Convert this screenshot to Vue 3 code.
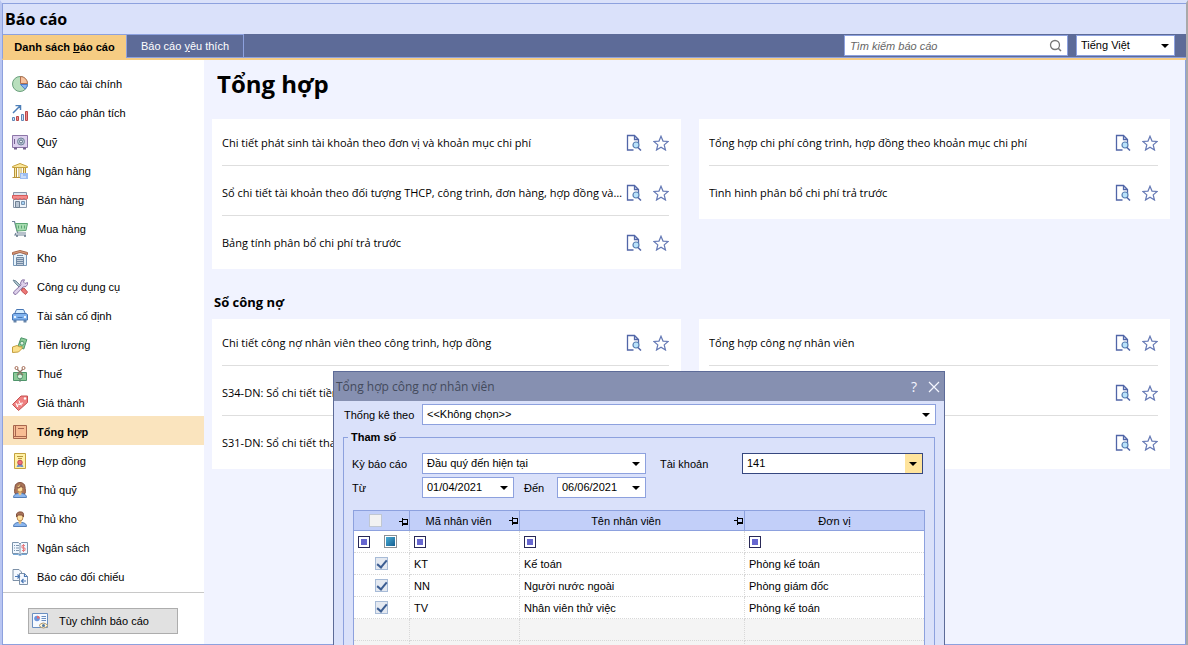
<script setup>
import { ref } from 'vue'

const menu = [
  { label: 'Báo cáo tài chính', icon: '<circle cx="8" cy="8" r="7.5" fill="#b9dfbd" stroke="#6a9f7c"/><path d="M8.500 .5A7 7 0 0 1 15.500 7.500H8.500Z" fill="#f8c4a0" stroke="#b06f50"/><path d="M8.500 8.500H15.500A7 7 0 0 1 13 13.200Z" fill="#8ab4f0" stroke="#4d7ec8"/>' },
  { label: 'Báo cáo phân tích', icon: '<path d="M1 8 5.500 3.500M3.500 .5H8.500V5M5 4 8 1" fill="none" stroke="#4d7fb8" stroke-width="1.500"/><path d="M.5 12.500h2v3h-2z" fill="#cfe0f4" stroke="#5d86b5"/><path d="M4.500 11.500h2v4h-2z" fill="#ee8a8a" stroke="#b94848"/><path d="M9.500 9.500h2v6h-2z" fill="#cfe0f4" stroke="#5d86b5"/><path d="M13.500 6.500h2v9h-2z" fill="#ee8a8a" stroke="#b94848"/>' },
  { label: 'Quỹ', icon: '<path d="M.5 1.500h15v12H.5z" fill="#ddd0ee" stroke="#8d76a8"/><path d="M2 14.500h3M11 14.500h3" stroke="#75608f" stroke-width="2"/><path d="M2.500 5v5" stroke="#75608f"/><circle cx="9" cy="7.500" r="3.500" fill="#b9c6d6" stroke="#73859b"/><circle cx="9" cy="7.500" r="1.500" fill="#e9eff5" stroke="#596b80"/>' },
  { label: 'Ngân hàng', icon: '<path d="M.5 4.500v-1L8 .5l7.500 3v1z" fill="#fbe79b" stroke="#c5a13d"/><path d="M2.500 5v9M4.500 5v9M7 5v9M9 5v9M11.500 5v9M13.500 5v9M.5 14.500h14" stroke="#b7943c"/><path d="M3.500 5v9M8 5v9M12.500 5v9" stroke="#fbe9a4"/><path d="M8 10h8v6H8z" fill="#9bbcf2"/><path d="M9 12h2M9 14h5" stroke="#f7fbff"/>' },
  { label: 'Bán hàng', icon: '<path d="M1.500 7.500h13v8h-13z" fill="#eef4fa" stroke="#8795a8"/><path d="M3.500 9.500h4v6h-4z" fill="#b9c6d5" stroke="#718294"/><path d="M9.500 9.500h3v3h-3z" fill="#a8d2f4" stroke="#7895b2"/><path d="M1.500 .5h13v3h-13z" fill="#dce4ee" stroke="#8795a8"/><path d="M.5 3.500h15v3l-1.500 1-2-1-2 1-2-1-2 1-2-1-2 1L.5 6z" fill="#f48b8b" stroke="#d45b5b"/>' },
  { label: 'Mua hàng', icon: '<path d="M0 .5h2.500l3 11.500h8.500M4 12l-1 2h11" fill="none" stroke="#72859a" stroke-width="1.200"/><path d="M3.500 2.500h12l-1.500 7-9 .5z" fill="#a8dcb1" stroke="#5da774"/><path d="M6.500 4.500v3M9.500 4.500v3M12.500 4.500v3" stroke="#5da774"/><circle cx="5" cy="15" r="1" fill="#607386"/><circle cx="13" cy="15" r="1" fill="#607386"/>' },
  { label: 'Kho', icon: '<path d="M1.500 5 8 1.500 14.500 5v10.500h-13z" fill="#e5f2fc" stroke="#7798b9"/><path d="M.5 4.500v-2L8 .5l7.500 2v2L8 2.500z" fill="#dda080" stroke="#a9694d"/><path d="M4.500 7.500h7v8h-7z" fill="#c4cfdb" stroke="#718aa5"/><path d="M5 9.500h6M5 11.500h6M5 13.500h6M5 5.500h6" stroke="#718aa5"/>' },
  { label: 'Công cụ dụng cụ', icon: '<path d="m1 1 3 1 7 7-1.500 1.500L3 4z" fill="#acc1cb" stroke="#728b99"/><path d="m10 10 2-1 3.500 4-2 2.500L9.500 12z" fill="#ed7777" stroke="#c24f4f"/><path d="M12.500 .8 10 1 8.500 4l.5 2-7.500 7 .5 2 2 .5L11 8l3-.5 1.500-2V3.500l-2.500 1-1.500-1.500z" fill="#ddd0ea" stroke="#8c77a8"/>' },
  { label: 'Tài sản cố định', icon: '<path d="m2.500 6 2-4.500h7l2 4.500z" fill="#d5edff" stroke="#4776b4"/><path d="M1.500 12h3v2.500h-3zM11.500 12h3v2.500h-3z" fill="#6885a8"/><path d="M.5 6.500 2 5.500h12l1.500 1v5.500H.5z" fill="#80b3ef" stroke="#4776b4"/><path d="M2 8h2v2H2zM12 8h2v2h-2z" fill="#e9f5ff"/><path d="M5.500 9.500h5" stroke="#4776b4"/>' },
  { label: 'Tiền lương', icon: '<path d="m9 .8 5.800 1.700-3 9.500-6-2z" fill="#8ccc99" stroke="#4e956a"/><circle cx="10" cy="6.200" r="2" fill="#dff1df" stroke="#4e956a"/><path d="M.5 10 5 8.500 8 10l2-.5v2L6.500 15l-6 .5z" fill="#fbe08b" stroke="#c49e3e"/>' },
  { label: 'Thuế', icon: '<path d="M1.500 6.500h13v8h-13z" fill="#8cca98" stroke="#4e956a"/><circle cx="8" cy="10.500" r="2.500" fill="#dff1df" stroke="#4e956a"/><path d="m5 3 6 6M11 3 5 9" stroke="#8f7467" stroke-width="1.300"/><circle cx="4.500" cy="2" r="1.500" fill="#fff" stroke="#a66d56"/><circle cx="11.500" cy="2" r="1.500" fill="#fff" stroke="#a66d56"/><path d="M8 12v4" stroke="#70817a"/>' },
  { label: 'Giá thành', icon: '<path d="M.5 9.500 9 1h6.500v6.500l-9 8z" fill="#ef8181" stroke="#c65151"/><circle cx="13" cy="3.500" r="1.200" fill="#fff"/><path d="m4 8 1.500 4 .5-3 4 1M7 5.500l1 3 3-.5" fill="none" stroke="#fff"/>' },
  { label: 'Tổng hợp', icon: '<path d="M1.500 1.500h13v13h-13z" fill="#f8bd94" stroke="#a7664e"/><path d="M3.500 1.500v11M1.500 12.500h13M6 4.500h6" stroke="#a7664e"/>' },
  { label: 'Hợp đồng', icon: '<path d="M2.500 .5h11v15h-11z" fill="#fff1a5" stroke="#c5a33f"/><path d="M5 3.500h6M6 5.500h4" stroke="#b9973d"/><path d="m6 11-1.500 3h3l.5-1 .5 1h3L10 11z" fill="#6e91cb"/><circle cx="8" cy="9.500" r="2.300" fill="#ef6e78" stroke="#bf4b58"/>' },
  { label: 'Thủ quỹ', icon: '<path d="M3 11.500C2 9 3 7 3 5c0-6 10-6 10 0 0 2 1 4 0 6.500z" fill="#a9735b" stroke="#84543f"/><path d="M1.500 15.500q0-3.500 4.500-4h4q4.500.5 4.500 4z" fill="#8bb6ef" stroke="#547fb8"/><path d="M6.500 9h3v3L8 13.500 6.500 12z" fill="#eec482"/><ellipse cx="8" cy="6.500" rx="2.800" ry="3.700" fill="#ffe0a1" stroke="#ba8b50"/><path d="M5 6q3 0 4-2.500L11 6" fill="none" stroke="#94614a" stroke-width="1.500"/>' },
  { label: 'Thủ kho', icon: '<path d="M1.500 15.500q0-3.500 4.500-4h4q4.500.5 4.500 4z" fill="#8bb6ef" stroke="#547fb8"/><path d="M6.500 9h3v3L8 13.500 6.500 12z" fill="#eec482"/><ellipse cx="8" cy="6" rx="3" ry="4" fill="#ffe0a1" stroke="#ba8b50"/><path d="M4.500 6V3q1.500-3 5-2 2.500 0 2 5l-1.500-2H6z" fill="#a9735b" stroke="#84543f"/>' },
  { label: 'Ngân sách', icon: '<path d="M.5 2.500h6L8 4l1.500-1.500h6v11h-6L8 15l-1.500-1.500h-6z" fill="#f0f7ff" stroke="#7d95ad"/><path d="M8 4v10M2 5.500h1M4 5.500h3M2 8h1M4 8h3M2 10.500h1M4 10.500h3" stroke="#7d95ad"/><path d="M13 5.500h-3v2.500h3v2.500h-3M11.500 4v8" fill="none" stroke="#e77e81"/><path d="M1 14.500h5l2 1 2-1h5" fill="none" stroke="#73a7d7"/>' },
  { label: 'Báo cáo đối chiếu', icon: '<path d="M1 .5h6l2.500 2.500v8.500H1z" fill="#f5f9ff" stroke="#7d91a8"/><path d="M7.500 4.500h5l3 3v8h-8z" fill="#f5f9ff" stroke="#7d91a8"/><path d="M12.500 4.500v3h3M3 7.500h4M5.500 5.500l2 2-2 2M14 12H9.500M11.500 10l-2 2 2 2" fill="none" stroke="#4d7ab6" stroke-width="1.200"/>' },
]
const active = ref(12)

const general = [
  ['Chi tiết phát sinh tài khoản theo đơn vị và khoản mục chi phí', 'Sổ chi tiết tài khoản theo đối tượng THCP, công trình, đơn hàng, hợp đồng và...', 'Bảng tính phân bổ chi phí trả trước'],
  ['Tổng hợp chi phí công trình, hợp đồng theo khoản mục chi phí', 'Tình hình phân bổ chi phí trả trước'],
]
const debts = [
  ['Chi tiết công nợ nhân viên theo công trình, hợp đồng', 'S34-DN: Sổ chi tiết tiền', 'S31-DN: Sổ chi tiết tha'],
  ['Tổng hợp công nợ nhân viên', '', ''],
]
const sections = [{ title: '', cards: general }, { title: 'Sổ công nợ', cards: debts }]

const people = ref([
  { on: true, code: 'KT', name: 'Kế toán', unit: 'Phòng kế toán' },
  { on: true, code: 'NN', name: 'Người nước ngoài', unit: 'Phòng giám đốc' },
  { on: true, code: 'TV', name: 'Nhân viên thử việc', unit: 'Phòng kế toán' },
])
</script>

<template>
  <div class="app">
    <header class="title"><h1>Báo cáo</h1></header>
    <nav class="tabs">
      <button class="tab on">Danh sách <u>b</u>áo cáo</button>
      <button class="tab">Báo cáo <u>y</u>êu thích</button>
      <div class="tools">
        <label class="search">
          <input type="text" placeholder="Tìm kiếm báo cáo" aria-label="Tìm kiếm báo cáo" />
          <svg width="14" height="14" viewBox="0 0 14 14"><circle cx="6" cy="6" r="4.500" fill="none" stroke="#777" stroke-width="1.300" /><path d="m9 9 3 3" stroke="#777" stroke-width="1.500" /></svg>
        </label>
        <div class="combo lang"><select aria-label="Ngôn ngữ"><option>Tiếng Việt</option></select></div>
      </div>
    </nav>

    <div class="body">
      <aside>
        <ul>
          <li v-for="(m, i) in menu" :key="m.label">
            <button class="item" :class="{ on: i === active }" @click="active = i">
              <svg width="16" height="16" viewBox="0 0 16 16" v-html="m.icon"></svg>{{ m.label }}
            </button>
          </li>
        </ul>
        <div class="foot">
          <button class="custom">
            <svg width="16" height="16" viewBox="0 0 16 16"><path d="M.5.5h15v14H.5z" fill="#f5f9ff" stroke="#6a8fc1" /><circle cx="5" cy="5.500" r="2.800" fill="#6b95dc" /><path d="M5 5.500V2.700a2.800 2.800 0 0 1 2.800 2.800z" fill="#e46c70" /><path d="M9.500 3.500H14M9.500 5.500H14M9.500 7.500H14" stroke="#6a8fc1" /><path d="M7 12.500q4-5 9 0-4.500 5-9 0z" fill="#fff5d5" stroke="#af9871" /><circle cx="11.500" cy="12.500" r="1.500" fill="#5078a6" /></svg>
            Tùy chỉnh báo cáo
          </button>
        </div>
      </aside>

      <main>
        <h2>Tổng hợp</h2>
        <section v-for="(s, k) in sections" :key="k">
          <h3 v-if="s.title">{{ s.title }}</h3>
          <div class="cards">
            <ul v-for="(card, c) in s.cards" :key="c" class="card">
              <li v-for="(r, i) in card" :key="i" class="report">
                <a href="#" class="name">{{ r }}</a>
                <button class="act" aria-label="Xem">
                  <svg width="16" height="17" viewBox="0 0 16 17"><path d="M7.500 16H1.500V1.500h7l4 4V9M8.500 1.500v4h4" fill="none" stroke="#5166a8" stroke-width="1.300" /><circle cx="10" cy="11" r="3" fill="#b9e2fb" stroke="#5a80b3" stroke-width="1.200" /><path d="m12 13.500 3 3" stroke="#5166a8" stroke-width="1.500" /></svg>
                </button>
                <button class="act" aria-label="Yêu thích">
                  <svg width="16" height="16" viewBox="0 0 16 16"><path d="m8 1.200 2 4.900 5.200.4-4 3.400 1.300 5.100L8 12.200 3.500 15l1.300-5.100-4-3.400L6 6.100z" fill="none" stroke="#6579b5" stroke-width="1.200" /></svg>
                </button>
              </li>
            </ul>
          </div>
        </section>
      </main>
    </div>

    <div class="dialog" role="dialog" aria-labelledby="dlg">
      <div class="bar">
        <span id="dlg">Tổng hợp công nợ nhân viên</span>
        <button aria-label="Trợ giúp">?</button>
        <button aria-label="Đóng"><svg width="12" height="12" viewBox="0 0 12 12"><path d="m1 1 10 10M11 1 1 11" stroke="#f4f6ff" stroke-width="1.200" /></svg></button>
      </div>
      <div class="stat">
        <label for="by">Thống kê theo</label>
        <div class="combo"><select id="by"><option>&lt;&lt;Không chọn&gt;&gt;</option></select></div>
      </div>
      <fieldset>
        <legend>Tham số</legend>
        <div class="form">
          <label for="period">Kỳ báo cáo</label>
          <div class="combo wide"><select id="period"><option>Đầu quý đến hiện tại</option></select></div>
          <label for="acc" class="acc">Tài khoản</label>
          <div class="combo hot"><select id="acc"><option>141</option></select></div>
          <label for="from">Từ</label>
          <div class="combo"><input id="from" type="text" value="01/04/2021" /></div>
          <label for="to" class="to">Đến</label>
          <div class="combo"><input id="to" type="text" value="06/06/2021" /></div>
        </div>
        <table>
          <colgroup><col class="c1" /><col class="c2" /><col class="c3" /><col /></colgroup>
          <thead>
            <tr>
              <th><div class="th"><input type="checkbox" class="all" aria-label="Chọn tất cả" /><i class="pin"></i></div></th>
              <th><div class="th">Mã nhân viên<i class="pin"></i></div></th>
              <th><div class="th">Tên nhân viên<i class="pin"></i></div></th>
              <th><div class="th">Đơn vị</div></th>
            </tr>
          </thead>
          <tbody>
            <tr>
              <td><div class="filter"><button class="op" aria-label="Lọc"></button><button class="tri" aria-label="Trạng thái"></button></div></td>
              <td v-for="n in 3" :key="n"><div class="filter"><button class="op" aria-label="Lọc"></button></div></td>
            </tr>
            <tr v-for="p in people" :key="p.code">
              <td class="mid"><input v-model="p.on" type="checkbox" :aria-label="p.name" /></td>
              <td>{{ p.code }}</td><td>{{ p.name }}</td><td>{{ p.unit }}</td>
            </tr>
            <tr v-for="n in 2" :key="'e' + n" class="empty"><td></td><td></td><td></td><td></td></tr>
          </tbody>
        </table>
      </fieldset>
    </div>
  </div>
</template>

<style>
html, body, #app { height: 100%; }
</style>

<style scoped>
* { box-sizing: border-box; }
ul { list-style: none; margin: 0; padding: 0; }
button, input, select { font: inherit; color: inherit; border: 0; padding: 0; margin: 0; background: none; border-radius: 0; }
svg { display: block; flex: none; }
.app { position: relative; min-height: 100%; display: flex; flex-direction: column; overflow: hidden; background: #f1f3ff; border-top: 3px solid #dae1fa; border-right: 2px solid #a9a9a9; border-left: 2px solid #b9c6f2; font: 11px/16px "Liberation Sans", sans-serif; color: #000; }
.title { height: 31px; padding-left: 2px; display: flex; align-items: center; background: #dae1fa; border: 1px solid #8da1de; border-width: 1px 0 0 1px; }
.title h1 { margin: 0; font: bold 16px/24px "Open Sans", sans-serif; }
.tabs { height: 26px; display: flex; background: #5d6b98; border-bottom: 2px solid #f6cc83; border-left: 1px solid #8da1de; }
.tab { width: 117px; height: 24px; color: #fff; border: 1px solid #8da1de; border-width: 1px 1px 1px 0; }
.tab.on { width: 124px; background: #f6cc83; color: #000; border-bottom: 0; font-weight: bold; }
.tools { flex: 1; display: flex; justify-content: flex-end; gap: 8px; padding: 1px 11px 1px 0; border-bottom: 1px solid #8da1de; }
.search { width: 224px; height: 21px; display: flex; align-items: center; padding: 0 4px 0 5px; background: #fff; border: 1px solid #8da1de; }
.search input { flex: 1; min-width: 0; font-style: italic; outline: 0; }
.search input::placeholder { color: #666; opacity: 1; }
.combo { position: relative; height: 21px; background: #fff; border: 1px solid #8da1de; }
.combo select, .combo input { width: 100%; height: 100%; padding: 0 20px 1px 4px; appearance: none; outline: 0; display: block; }
.combo::after { content: ""; position: absolute; right: 5px; top: 8px; border: 4px solid transparent; border-top-color: #000; border-bottom: 0; pointer-events: none; }
.lang { width: 99px; }
.body { flex: 1; display: flex; border: 1px solid #8da1de; border-top: 0; }
aside { width: 201px; flex: none; background: #fff; padding-top: 8px; }
.item { width: 100%; height: 29px; display: flex; align-items: center; gap: 9px; padding: 2px 0 0 9px; text-align: left; }
.item.on { background: #fae4be; font-weight: bold; }
.foot { margin-top: 2px; border-top: 1px solid #c8c8c8; padding: 15px 26px 10px 25px; }
.custom { width: 100%; height: 26px; display: flex; align-items: center; gap: 11px; padding-left: 3px; background: #e1e1e1; border: 1px solid #adadad; }
main { flex: 1; min-width: 0; padding: 0 15px 0 8px; font-family: "Open Sans", sans-serif; }
h2 { margin: 0; padding: 8px 0 19px 5px; font: bold 24px/32px "Open Sans", sans-serif; }
h3 { margin: 0; padding: 21px 0 5px 2px; font: bold 13px/24px "Open Sans", sans-serif; }
.cards { display: grid; grid-template-columns: minmax(0, 469fr) minmax(0, 471fr); gap: 18px; align-items: start; }
.card { background: #fff; padding: 0 12px 3px 10px; }
.report { height: 50px; padding-top: 4px; display: flex; align-items: center; border-bottom: 1px solid #dedede; }
.report:first-child { height: 47px; padding-top: 1px; }
.report:last-child { border-bottom-color: transparent; }
.name { flex: 1; min-width: 0; margin-right: 4px; overflow: hidden; text-overflow: ellipsis; white-space: nowrap; color: inherit; text-decoration: none; }
.act + .act { margin-left: 11px; }
.dialog { position: absolute; left: 331px; top: 368px; bottom: 0; width: 612px; overflow: hidden; background: #dae1fa; border: 1px solid #5d6b98; border-bottom: 0; }
.bar { height: 29px; display: flex; align-items: center; gap: 11px; padding: 0 4px 0 2px; background: #8690b1; color: #434a5c; font: 12px/16px "Open Sans", sans-serif; }
.bar span { flex: 1; }
.bar button { color: #f4f6ff; font-size: 14px; }
.stat { display: flex; align-items: center; gap: 8px; padding: 3px 8px 0 10px; }
.stat .combo { flex: 1; }
.stat label { width: 70px; white-space: nowrap; }
fieldset { margin: 4px 9px 0 9px; padding: 8px 9px 0 8px; min-width: 0; border: 1px solid #8da1de; }
legend { padding: 0 3px; margin-left: -4px; font-weight: bold; }
.form { display: grid; grid-template-columns: 70px 92px 43px 89px 96px 181px; row-gap: 3px; align-items: center; }
.wide { grid-column: span 3; }
.acc { padding-left: 14px; }
.to { padding-left: 10px; }
.hot { border-color: #35477f; }
.hot::before { content: ""; position: absolute; right: 0; top: 0; bottom: 0; width: 17px; background: #ffe49c; pointer-events: none; }
table { width: calc(100% - 1px); margin: 12px 0 0 1px; table-layout: fixed; border-collapse: collapse; background: #fff; border: 1px solid #8da1de; }
.c1 { width: 56px; } .c2 { width: 110px; } .c3 { width: 225px; }
th { height: 20px; padding: 0; font-weight: normal; background: #c2cff9; border: 1px solid #8da1de; }
.th { position: relative; display: flex; align-items: center; justify-content: center; padding-right: 12px; }
th:last-child .th { padding-right: 0; }
.pin { position: absolute; right: 1px; top: 5px; width: 6px; height: 6px; border: 1px solid #000; border-width: 1px 1px 2px 1px; }
.pin::before { content: ""; position: absolute; left: -4px; top: 1px; width: 3px; height: 1px; background: #000; }
.pin::after { content: ""; position: absolute; left: -1px; top: -2px; width: 1px; height: 8px; background: #000; }
td { height: 22px; padding: 0 4px; border: 1px dotted #d8d8d8; }
.empty td { background: #f4f4f4; }
.mid { text-align: center; }
input[type="checkbox"] { appearance: none; display: block; width: 13px; height: 13px; margin: 0 auto; background: #e4e9f1; border: 1px solid #a7bbd7; }
td input[type="checkbox"]:checked::after { content: ""; display: block; width: 4px; height: 8px; margin: 0 auto; border: solid #3b5d92; border-width: 0 2px 2px 0; transform: rotate(40deg); }
.th .all { margin: 0; background: #f2f2f2; border-color: #c0c7d2; }
.filter { display: flex; align-items: center; gap: 14px; }
.op { width: 12px; height: 12px; background: #6666cf; border: 1px solid #292957; box-shadow: inset 0 0 0 2px #fff; }
.tri { width: 13px; height: 13px; background: linear-gradient(135deg, #4cb5dc, #12568a); border: 1px solid #8a8f94; box-shadow: inset 0 0 0 1px #fff; }
</style>
